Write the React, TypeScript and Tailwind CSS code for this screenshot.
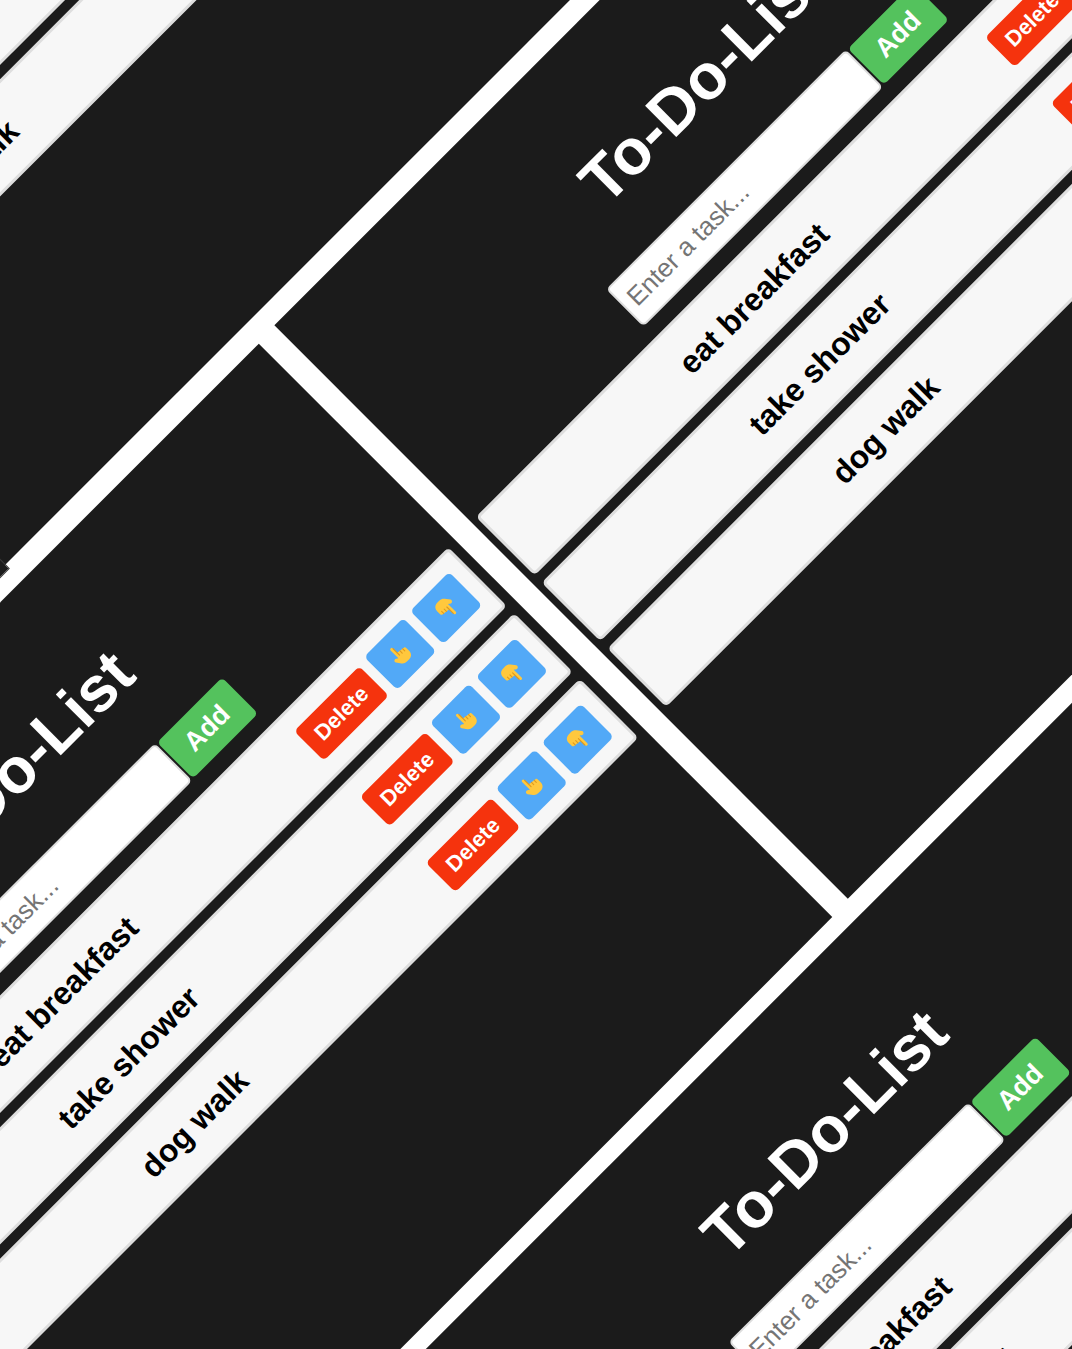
type IconProps = { className?: string };

function PointingHand({ className = '' }: IconProps) {
  return (
    <svg viewBox="0 0 24 24" className={className} aria-hidden="true">
      <path
        fill="#ffc83d"
        d="M7.600 2.200a1.500 1.500 0 0 1 3 0V8.800l8.800 1.200c1 .2 1.600.9 1.600 1.900v4.200c0 4-2.600 6.400-6.600 6.400h-3c-2.400 0-4-.9-5.300-2.600L2.600 15.200c-.7-1.100-.3-2.300.6-2.900.9-.6 2-.5 3.400.7l1 .8z"
      />
      <path
        fill="none"
        stroke="#e09a1f"
        strokeWidth="1.200"
        strokeLinecap="round"
        d="M10.700 2.800v9.500M14.200 9.500v3.200M17.700 10v3"
      />
    </svg>
  );
}

const iconButton =
  'flex h-[47px] w-[55px] items-center justify-center rounded-[5px] bg-[#52a9f7]';

function TaskRow({ text }: { text: string }) {
  return (
    <li className="flex h-[83px] items-center gap-[10px] rounded-[5px] border-[3px] border-[#dedede] bg-[#f7f7f7] px-[14px]">
      <span className="flex-1 pr-1 text-center text-[32px] font-bold text-black">{text}</span>
      <button
        type="button"
        className="h-[42px] w-[92px] rounded-[5px] bg-[#f5330d] text-[22px] font-bold text-white"
      >
        Delete
      </button>
      <button type="button" aria-label={'Move up ' + text} className={iconButton}>
        <PointingHand className="size-[23px]" />
      </button>
      <button type="button" aria-label={'Move down ' + text} className={iconButton}>
        <PointingHand className="size-[23px] rotate-180" />
      </button>
    </li>
  );
}

const tasks = ['eat breakfast', 'take shower', 'dog walk'];

function TodoCard({ place }: { place: string }) {
  return (
    <section
      className={
        'absolute flex h-[811px] w-[955px] flex-col bg-[#1b1b1b] pt-[92px] pr-[10px] pl-[7px] ' + place
      }
    >
      <h1 className="text-center text-[64px] leading-[74px] font-bold text-white">To-Do-List</h1>
      <div className="mt-[43px] flex items-center justify-center gap-[2px]">
        <input
          type="text"
          aria-label="Task"
          placeholder="Enter a task..."
          className="h-[53px] w-[339px] rounded-[5px] border-2 border-[#dedede] bg-white px-2 text-[26px] text-black placeholder:text-[#757575]"
        />
        <button
          type="button"
          className="h-[51px] w-[92px] rounded-[5px] bg-[#54c25d] text-[27px] font-bold text-white"
        >
          Add
        </button>
      </div>
      <ol className="mt-4 flex flex-col gap-[10px]">
        {tasks.map((task) => (
          <TaskRow key={task} text={task} />
        ))}
      </ol>
    </section>
  );
}

export default function App() {
  return (
    <main className="relative h-screen overflow-hidden bg-white font-['Liberation_Sans',Arial,sans-serif]">
      <div className="absolute top-0 left-0 size-0 origin-top-left -rotate-45">
        <TodoCard place="left-[-506px] top-[-408px]" />
        <TodoCard place="left-[-1351px] top-[-403px] outline outline-[#3a3a3a]" />
        <TodoCard place="left-[-1015px] top-[426px]" />
        <TodoCard place="left-[-36px] top-[424px]" />
        <TodoCard place="left-[-694px] top-[1255px]" />
      </div>
    </main>
  );
}
